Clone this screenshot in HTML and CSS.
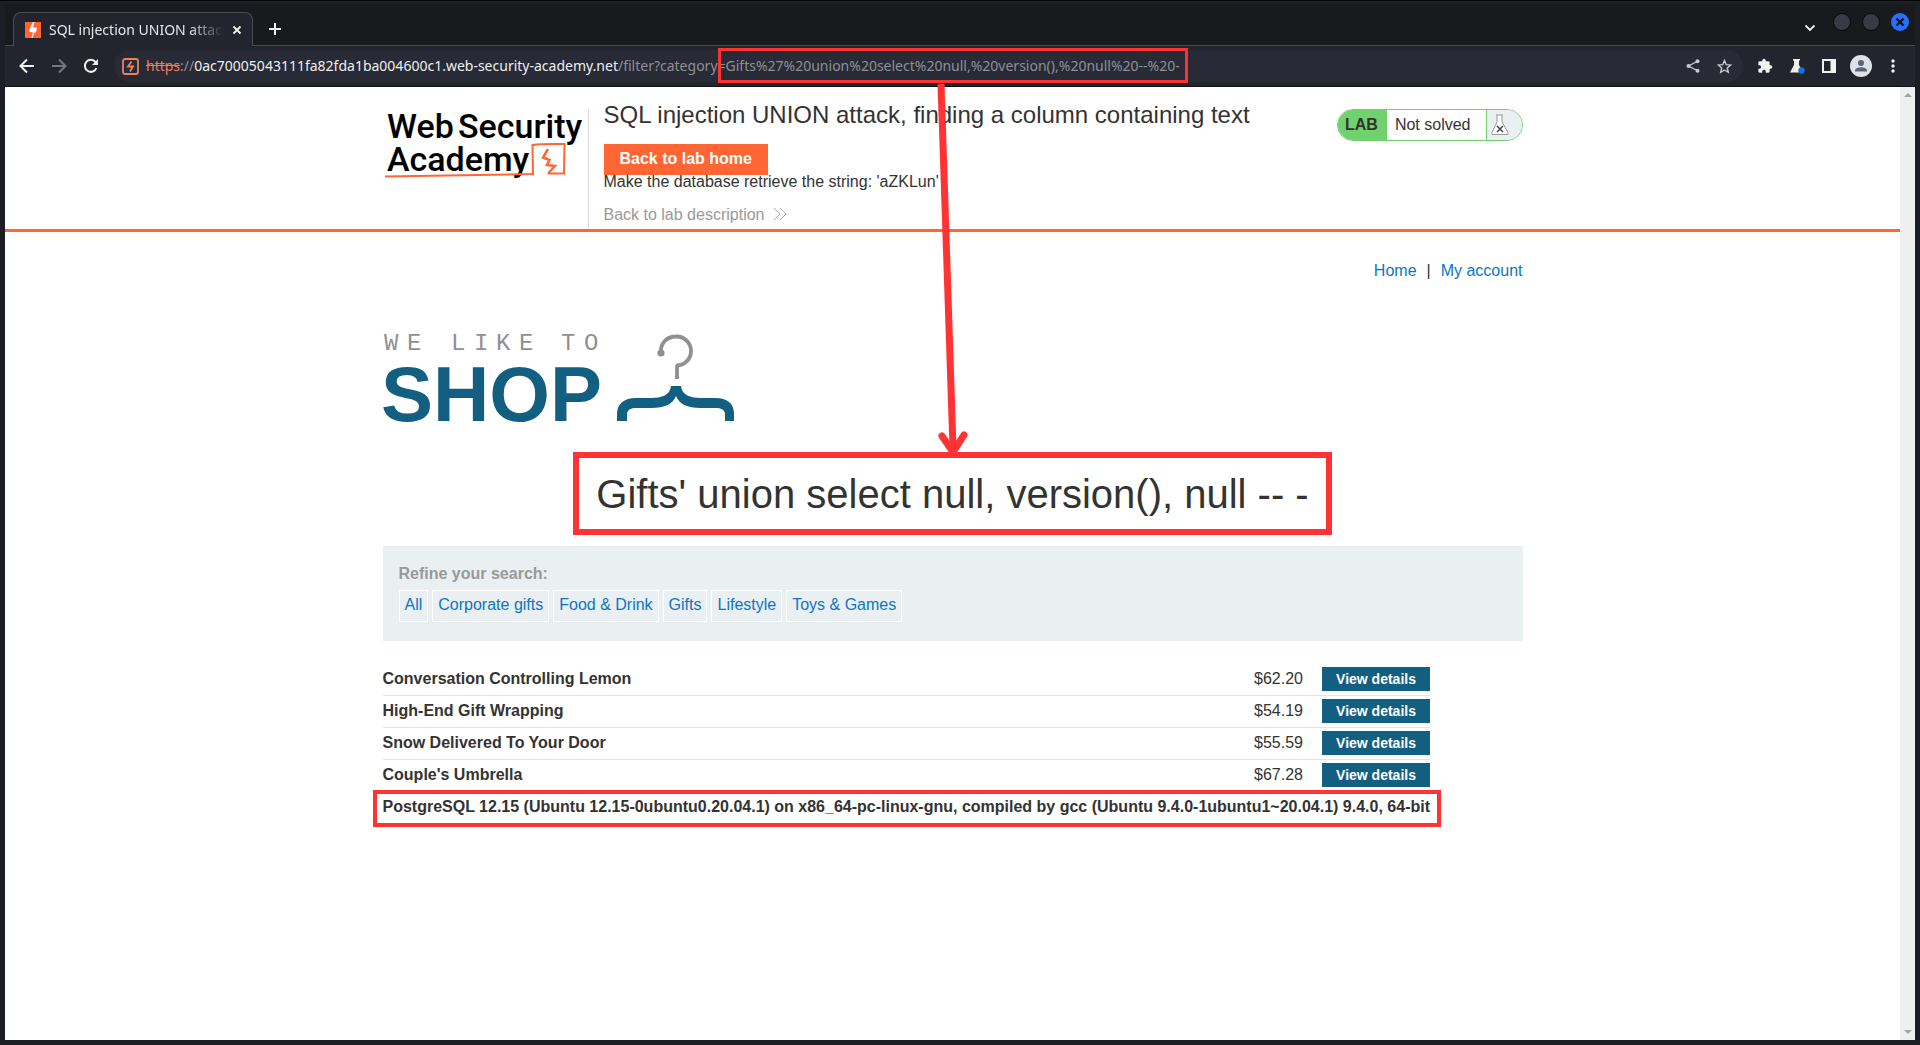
FILE: index.html
```html
<!DOCTYPE html>
<html lang="en">
<head>
<meta charset="utf-8">
<title>SQL injection UNION attack, finding a column containing text</title>
<link rel="stylesheet" href="styles.css">
</head>
<body>
<div class="window">
  <header class="tabstrip">
    <div class="tab">
      <svg class="favicon" viewBox="0 0 16 16"><rect width="16" height="16" fill="#ff6633"/><path d="M8 0 9.500 0 8 5 12 6 11 10 9 11 7.500 16 6.500 16 8 10.500 4 9.500 5 6z" fill="#fff"/></svg>
      <span class="tab-title">SQL injection UNION attack</span>
      <button class="icon-btn" aria-label="Close tab"><svg width="10" height="10" viewBox="0 0 10 10"><path d="M1.500 1.500 8.500 8.500M8.500 1.500 1.500 8.500" stroke="#f1f1ee" stroke-width="1.800"/></svg></button>
    </div>
    <button class="icon-btn new-tab" aria-label="New tab"><svg width="12" height="12" viewBox="0 0 12 12"><path d="M6 0V12M0 6H12" stroke="#f1f1ee" stroke-width="2"/></svg></button>
    <div class="window-controls">
      <button class="icon-btn search-tabs" aria-label="Search tabs"><svg width="12" height="8" viewBox="0 0 12 8"><path d="M1.500 1.500 6 6 10.500 1.500" fill="none" stroke="#f1f1ee" stroke-width="1.800"/></svg></button>
      <button class="dot" aria-label="Minimize"></button>
      <button class="dot" aria-label="Maximize"></button>
      <button class="dot close" aria-label="Close"><svg width="10" height="10" viewBox="0 0 10 10"><path d="M1.500 1.500 8.500 8.500M8.500 1.500 1.500 8.500" stroke="#10131c" stroke-width="2.400"/></svg></button>
    </div>
  </header>
  <div class="toolbar">
    <nav class="history">
      <button class="icon-btn" aria-label="Back"><svg width="16" height="16" viewBox="0 0 16 16"><path d="M15 8H2M8 1.500 1.500 8 8 14.500" fill="none" stroke="#f1f1ee" stroke-width="2"/></svg></button>
      <button class="icon-btn" aria-label="Forward"><svg width="16" height="16" viewBox="0 0 16 16"><path d="M1 8H14M8 1.500 14.500 8 8 14.500" fill="none" stroke="#77787c" stroke-width="2"/></svg></button>
      <button class="icon-btn" aria-label="Reload"><svg width="16" height="16" viewBox="0 0 16 16"><path d="M13.500 10A6 6 0 1 1 12.500 4" fill="none" stroke="#f1f1ee" stroke-width="2"/><path d="M15 1V7H9z" fill="#f1f1ee"/></svg></button>
    </nav>
    <div class="omnibox">
      <svg class="site-icon" viewBox="0 0 17 17"><rect x="1" y="1" width="15" height="15" rx="2" fill="none" stroke="#e8835a" stroke-width="1.800"/><path d="M9.500 3.500 6 8.500 11 8.500 8 13.500" fill="none" stroke="#e8835a" stroke-width="1.800"/></svg>
      <div class="url" role="textbox" aria-label="Address"><s class="scheme">https</s>://<span class="host">0ac70005043111fa82fda1ba004600c1.web-security-academy.net</span>/filter?category=<span class="payload">Gifts%27%20union%20select%20null,%20version(),%20null%20--%20-</span></div>
      <button class="icon-btn" aria-label="Share"><svg width="14" height="14" viewBox="0 0 14 14" fill="#c9cacc"><path d="M12 2 2.500 7 12 12" fill="none" stroke="#c9cacc" stroke-width="1.400"/><circle cx="11.500" cy="2.300" r="2"/><circle cx="2.500" cy="7" r="2"/><circle cx="11.500" cy="11.700" r="2"/></svg></button>
      <button class="icon-btn" aria-label="Bookmark"><svg width="15" height="15" viewBox="0 0 15 15"><path d="M7.500 1.500 9.200 5.600 13.700 6 10.300 8.900 11.300 13.300 7.500 11 3.700 13.300 4.700 8.900 1.300 6 5.800 5.600z" fill="none" stroke="#c9cacc" stroke-width="1.400"/></svg></button>
    </div>
    <div class="extensions">
      <button class="icon-btn" aria-label="Extensions"><svg width="16" height="16" viewBox="0 0 24 24"><path d="M20.500 11H19V7a2 2 0 0 0-2-2h-4V3.500a2.500 2.500 0 0 0-5 0V5H4a2 2 0 0 0-2 2v3.800h1.500a2.700 2.700 0 0 1 0 5.400H2V20a2 2 0 0 0 2 2h3.800v-1.500a2.700 2.700 0 0 1 5.400 0V22H17a2 2 0 0 0 2-2v-4h1.500a2.500 2.500 0 0 0 0-5z" fill="#f1f1ee"/></svg></button>
      <button class="icon-btn" aria-label="Experiments"><svg width="16" height="16" viewBox="0 0 16 16"><path d="M4 1H11V2.500H10V7L14 14.500H1L5 7V2.500H4z" fill="#f1f1ee"/><circle cx="12.500" cy="12.500" r="3.200" fill="#1a6fe8"/></svg></button>
      <button class="icon-btn" aria-label="Side panel"><svg width="16" height="16" viewBox="0 0 16 16"><path d="M1 1H15V15H1zM3 3V13H9.500V3z" fill="#f1f1ee" fill-rule="evenodd"/></svg></button>
      <button class="icon-btn" aria-label="Profile"><svg width="22" height="22" viewBox="0 0 22 22"><circle cx="11" cy="11" r="11" fill="#dee1e6"/><circle cx="11" cy="8" r="3" fill="#5a6678"/><path d="M5 16.500V15.500C5 13 9 12.200 11 12.200S17 13 17 15.500V16.500z" fill="#5a6678"/></svg></button>
      <button class="icon-btn" aria-label="Menu"><svg width="16" height="16" viewBox="0 0 16 16" fill="#f1f1ee"><circle cx="8" cy="3" r="1.700"/><circle cx="8" cy="8" r="1.700"/><circle cx="8" cy="13" r="1.700"/></svg></button>
    </div>
  </div>

  <div class="viewport">
    <div class="page">
      <section class="lab-header">
        <div class="container lab-row">
          <a class="academy-logo" href="#" aria-label="Web Security Academy">
            <svg width="200" height="72" viewBox="0 0 200 72">
              <g class="academy-text"><text x="4" y="29">Web</text><text x="75" y="29">Security</text><text x="4" y="62">Academy</text></g>
              <path d="M2 67.500C45 67 90 66 150 65L149.500 36C160 34.500 170 35 181.500 35L181 64.500 164.500 64.500" fill="none" stroke="#ff6633" stroke-width="2"/>
              <path d="M165 40 160 48.500 166.500 51 164 56 172 57 165.500 64" fill="none" stroke="#ff6633" stroke-width="2.500"/>
            </svg>
          </a>
          <div class="lab-info">
            <h2 class="lab-title">SQL injection UNION attack, finding a column containing text</h2>
            <a class="lab-home" href="#">Back to lab home</a>
            <p class="hint">Make the database retrieve the string: 'aZKLun'</p>
            <a class="lab-desc" href="#">Back to lab description <svg width="14" height="12" viewBox="0 0 14 12"><path d="M1 0 7 6 1 12M7 0 13 6 7 12" fill="none" stroke="#aaa"/></svg></a>
          </div>
          <div class="lab-status">
            <span class="lab-tag">LAB</span><span class="lab-state">Not solved</span>
            <span class="lab-flask"><svg width="18" height="22" viewBox="0 0 18 22"><path d="M5 1H12M6 1V8L1 18.500V20.500H17V18.500L11 8V1" fill="#fff" stroke="#999"/><path d="M6 12 12 18M12 12 6 18" stroke="#444" stroke-width="1.500"/></svg></span>
          </div>
        </div>
      </section>

      <main class="container shop">
        <nav class="account-nav"><a href="#">Home</a><span>|</span><a href="#">My account</a></nav>
        <svg class="shop-logo" width="354" height="92" viewBox="0 0 354 92" role="img" aria-label="We like to shop">
          <text class="tagline" y="16" x="1 24 46 68 91 113 136 158 178 201">WE LIKE TO</text>
          <text class="brand" x="-2" y="87">SHOP</text>
          <g transform="translate(1 0)">
            <circle cx="277" cy="19" r="3.600" fill="#8f9092"/>
            <path d="M277 19C276 9 283 2.500 292 2.500A14.500 14.500 0 0 1 293 31.500V45" fill="none" stroke="#8f9092" stroke-width="3.800" stroke-linejoin="bevel"/>
            <path d="M287 52H297C298 61 306 64 317 64H331C344 64 350 70 350 80V87H341V81C341 76 338 74 332 74H317C303 74 295 70 292 62C289 70 281 74 267 74H252C246 74 243 76 243 81V87H233V80C233 70 240 64 252 64H267C278 64 286 61 287 52z" fill="#125f82"/>
          </g>
        </svg>
        <div class="heading-row"><h1 class="category">Gifts' union select null, version(), null -- -
          <svg class="arrow" width="40" height="372" viewBox="0 0 40 372" aria-hidden="true"><path d="M10 0 22 364" stroke="#ff3333" stroke-width="7"/><path d="M11 352 22 368 33 351" fill="none" stroke="#ff3333" stroke-width="7" stroke-linecap="round" stroke-linejoin="round"/></svg>
        </h1></div>

        <section class="filters">
          <span class="filters-label">Refine your search:</span>
          <div class="filter-links"><a href="#">All</a><a href="#">Corporate gifts</a><a href="#">Food &amp; Drink</a><a href="#">Gifts</a><a href="#">Lifestyle</a><a href="#">Toys &amp; Games</a></div>
        </section>

        <table class="products">
          <tbody>
            <tr><th scope="row">Conversation Controlling Lemon</th><td class="price">$62.20</td><td class="action"><a class="details" href="#">View details</a></td></tr>
            <tr><th scope="row">High-End Gift Wrapping</th><td class="price">$54.19</td><td class="action"><a class="details" href="#">View details</a></td></tr>
            <tr><th scope="row">Snow Delivered To Your Door</th><td class="price">$55.59</td><td class="action"><a class="details" href="#">View details</a></td></tr>
            <tr class="last"><th scope="row">Couple's Umbrella</th><td class="price">$67.28</td><td class="action"><a class="details" href="#">View details</a></td></tr>
            <tr class="last"><th scope="row" colspan="3" class="marked-row">PostgreSQL 12.15 (Ubuntu 12.15-0ubuntu0.20.04.1) on x86_64-pc-linux-gnu, compiled by gcc (Ubuntu 9.4.0-1ubuntu1~20.04.1) 9.4.0, 64-bit</th></tr>
          </tbody>
        </table>
      </main>
    </div>
    <div class="scrollbar"><span class="up"></span><span class="down"></span></div>
  </div>
</div>
</body>
</html>
```
FILE: styles.css
```css
* { box-sizing: border-box; }
body {
  margin: 0;
  font: 16px/24px "Liberation Sans", Arial, sans-serif;
  color: #333332;
}
a { color: #0b76c4; text-decoration: none; }
button { font: inherit; border: 0; padding: 0; }

/* Browser window */
.window {
  min-height: 100vh;
  display: flex;
  flex-direction: column;
  padding: 4px 5px 5px;
  background: #1c1e26;
  border-top: 1px solid #050608;
}
.tabstrip {
  display: flex;
  align-items: flex-end;
  height: 41px;
  background: #181a1e;
  border-bottom: 1px solid #4b4c50;
  font: 14px/20px "Noto Sans", sans-serif;
}
.tab {
  display: flex;
  align-items: center;
  width: 240px;
  height: 34px;
  margin: 0 0 -1px 8px;
  padding: 0 10px 0 11px;
  border: 1px solid #4b4c50;
  border-bottom: 0;
  border-radius: 8px 8px 0 0;
  background: #22252e;
  color: #e6e7e9;
}
.favicon { width: 16px; height: 16px; flex: none; }
.tab-title {
  flex: 1;
  margin: 0 8px;
  overflow: hidden;
  white-space: nowrap;
  mask-image: linear-gradient(90deg, #000 80%, transparent);
}
.icon-btn {
  display: inline-flex;
  align-items: center;
  justify-content: center;
  background: none;
}
.new-tab { height: 32px; margin-left: 16px; }
.window-controls {
  display: flex;
  align-items: center;
  gap: 11px;
  height: 34px;
  margin: 0 6px auto auto;
}
.search-tabs { margin: 12px 6px 0 0; }
.dot {
  display: flex;
  align-items: center;
  justify-content: center;
  width: 18px;
  height: 18px;
  border: 1px solid #08090c;
  border-radius: 50%;
  background: #363b47;
}
.dot.close { border: 0; background: #2470ff; }

.toolbar {
  display: flex;
  align-items: center;
  height: 41px;
  padding: 0 14px;
  background: #22252e;
  border-bottom: 1px solid #101114;
}
.history { display: flex; gap: 16px; margin-right: 15px; }
.omnibox {
  flex: 1;
  display: flex;
  align-items: center;
  height: 32px;
  padding: 0 11px 0 8px;
  border-radius: 16px;
  background: #282a35;
}
.site-icon { width: 17px; height: 17px; margin-right: 7px; }
.url {
  flex: 1;
  font: 14px/20px "Noto Sans", sans-serif;
  color: #8f9196;
  white-space: nowrap;
}
.scheme { color: #e8835a; }
.host { color: #eeeff0; }
.payload { position: relative; }
.payload::after {
  content: "";
  position: absolute;
  inset: -8px -8px;
  border: 3px solid #ff3333;
}
.omnibox .icon-btn { margin-left: 17px; }
.extensions { display: flex; align-items: center; gap: 16px; margin-left: 14px; }
.extensions .icon-btn:nth-child(4) { margin: 0 -3px; }

/* Web page */
.viewport { flex: 1; display: flex; background: #fff; }
.page { flex: 1; }
.scrollbar {
  width: 15px;
  display: flex;
  flex-direction: column;
  align-items: center;
  justify-content: space-between;
  padding: 6px 0;
  background: #efefef;
}
.up, .down { border: 4px solid transparent; }
.up { border-top: 0; border-bottom-color: #a3a3a3; }
.down { border-bottom: 0; border-top-color: #a3a3a3; }

.container { width: 1140px; max-width: 100%; margin: 0 auto; }
.lab-header { border-bottom: 3px solid #ff6633; }
.lab-row { display: flex; align-items: flex-start; padding-top: 16px; }
.academy-logo { width: 206px; height: 120px; margin-top: 6px; }
.academy-logo { border-right: 1px solid #dedede; }
.academy-text { font: 500 34px Roboto, sans-serif; fill: #000; }
.lab-info {
  flex: 1;
  display: flex;
  flex-direction: column;
  align-items: flex-start;
  padding-left: 15px;
}
.lab-title { margin: 0 0 17px; font-size: 24px; line-height: 24px; font-weight: 400; }
.lab-home {
  padding: 3px 16px 4px;
  background: #ff6633;
  color: #fff;
  font-weight: 700;
}
.hint { margin: -5px 0 9px; }
.lab-desc { color: #999; }
.lab-desc svg { margin-left: 4px; }
.lab-status {
  display: flex;
  height: 32px;
  margin-top: 6px;
  border: 1px solid #70d16d;
  border-radius: 16px;
  overflow: hidden;
  line-height: 30px;
}
.lab-tag { padding: 0 9px 0 7px; background: #70d16d; font-weight: 700; }
.lab-state { padding: 0 15px 0 8px; border-right: 1px solid #70d16d; }
.lab-flask { display: flex; align-items: center; width: 35px; padding-left: 4px; background: #eaeff2; }

.account-nav { display: flex; justify-content: flex-end; gap: 10px; padding-top: 27px; }
.shop-logo { display: block; margin-top: 51px; overflow: visible; }
.tagline { font: 24px "Liberation Mono", monospace; fill: #8f9092; }
.brand { font: 700 78px "Liberation Sans", sans-serif; fill: #125f82; }
.heading-row { display: flex; justify-content: center; margin: 26px 0 11px; }
.category {
  position: relative;
  margin: 0;
  padding: 18px 17px 17px;
  border: 6px solid #ff3333;
  font-size: 40px;
  line-height: 36px;
  font-weight: 400;
}
.arrow { position: absolute; right: 50%; bottom: 100%; margin: 0 -18px 2px 0; pointer-events: none; }

.filters { padding: 16px 16px 19px; background: #eaeff2; }
.filters-label { font-weight: 700; color: #999; }
.filter-links { display: flex; flex-wrap: wrap; gap: 4px; margin-top: 4px; }
.filter-links a { padding: 2px 5px 4px; border: 1px solid #fff; }

.products { margin-top: 22px; border-collapse: collapse; }
.products th, .products td { height: 32px; padding: 0; border-bottom: 1px solid #e3e3e3; }
.products .last th, .products .last td { border-bottom: 0; }
.products th { text-align: left; white-space: nowrap; }
.price { width: 68px; }
.action { width: 108px; }
.details {
  display: block;
  background: #125f82;
  color: #fff;
  font-size: 14px;
  font-weight: 700;
  text-align: center;
}
.marked-row { position: relative; }
.marked-row::after {
  content: "";
  position: absolute;
  inset: -1px -11px -4px -10px;
  border: 4px solid #ff3333;
}
```
